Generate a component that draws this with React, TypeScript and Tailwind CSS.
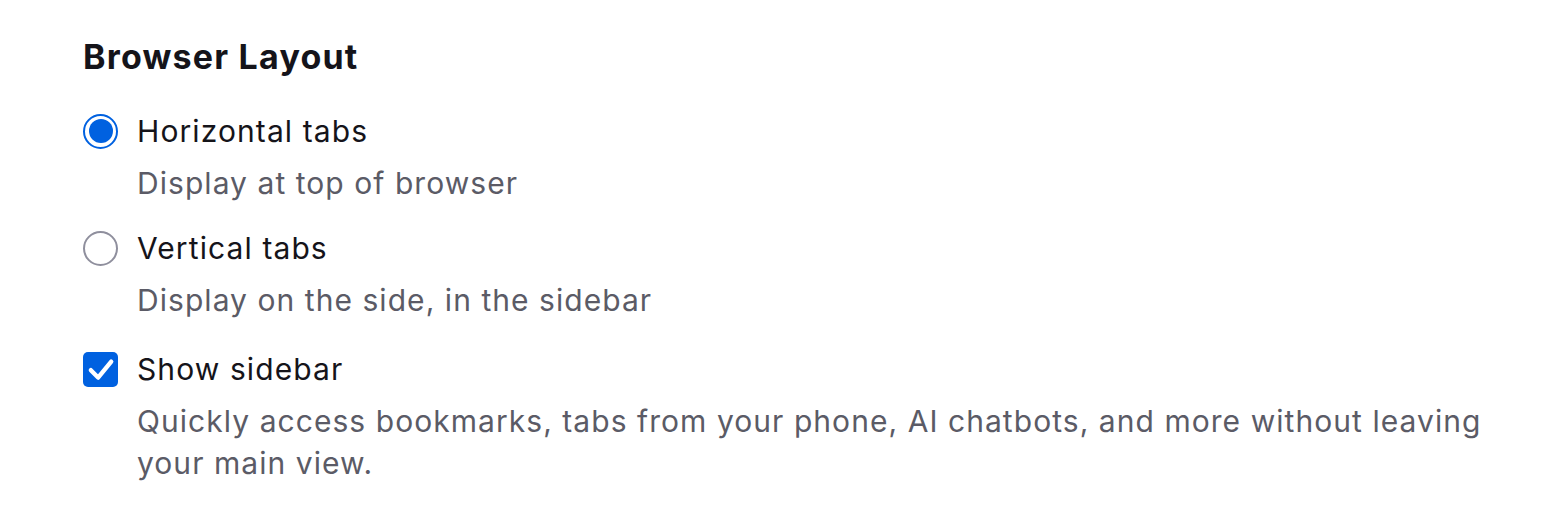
import React from "react";

const font = { fontFamily: "Inter, 'Noto Sans', sans-serif" };

function Radio({ checked }: { checked: boolean }) {
  return checked ? (
    <div className="w-[35px] h-[35px] shrink-0 rounded-full border-2 border-[#0061e0] bg-white flex items-center justify-center">
      <div className="w-[24px] h-[24px] rounded-full bg-[#0061e0]" />
    </div>
  ) : (
    <div className="w-[35px] h-[35px] shrink-0 rounded-full border-2 border-[#8f8f9d] bg-white" />
  );
}

function Checkbox() {
  return (
    <div className="w-[35px] h-[35px] shrink-0 rounded-[5px] bg-[#0061e0] flex items-center justify-center">
      <svg viewBox="0 0 16 16" className="w-[35px] h-[35px]" fill="none">
        <path d="M3.6 8.3 L6.9 11.7 L12.9 4.4" stroke="#fff" strokeWidth="2" strokeLinecap="round" strokeLinejoin="round" />
      </svg>
    </div>
  );
}

function Option({
  control,
  label,
  desc,
  className,
}: {
  control: React.ReactNode;
  label: string;
  desc: string;
  className?: string;
}) {
  return (
    <div className={"flex flex-col " + (className ?? "")}>
      <div className="flex items-center gap-[19px] h-[42px]">
        {control}
        <span className="text-[30px] leading-[42px] tracking-[1.1px] text-[#15141a]">{label}</span>
      </div>
      <p className="mt-[10px] pl-[54px] text-[30px] leading-[42px] tracking-[1.05px] text-[#5b5b66]">{desc}</p>
    </div>
  );
}

export default function App() {
  return (
    <div className="w-[1560px] h-[516px] bg-white" style={font}>
      <div className="pl-[83px] pr-[60px] pt-[37px] w-[1560px]">
        <h2 className="text-[34px] leading-[40px] font-bold tracking-[1.2px] text-[#15141a]">Browser Layout</h2>
        <div className="mt-[33px] flex flex-col">
          <Option control={<Radio checked />} label="Horizontal tabs" desc="Display at top of browser" />
          <Option
            className="mt-[23px]"
            control={<Radio checked={false} />}
            label="Vertical tabs"
            desc="Display on the side, in the sidebar"
          />
          <Option
            className="mt-[27px]"
            control={<Checkbox />}
            label="Show sidebar"
            desc="Quickly access bookmarks, tabs from your phone, AI chatbots, and more without leaving your main view."
          />
        </div>
      </div>
    </div>
  );
}
